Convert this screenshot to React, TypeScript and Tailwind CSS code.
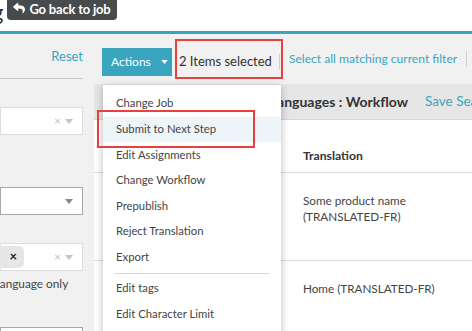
import { FaReply } from 'react-icons/fa'

const teal = 'text-[#3aa5bf]'

function Caret({ className = '' }: { className?: string }) {
  return (
    <svg width="8" height="5" viewBox="0 0 8 5" className={className}>
      <path d="M0 0h8L4 5z" fill="currentColor" />
    </svg>
  )
}

function SelectBox({ className = '', clear = true, children }: { className?: string; clear?: boolean; children?: React.ReactNode }) {
  return (
    <div className={`flex items-center w-[83px] h-[28px] bg-white border ${className}`}>
      <div className="flex-1 flex items-center">{children}</div>
      {clear && <span className="text-[12px] text-[#c4c4c4] mr-[4px] leading-none">×</span>}
      <Caret className={clear ? 'text-[#c4c4c4] mr-[9px]' : 'text-[#888] mr-[9px]'} />
    </div>
  )
}

const menuItems = [
  'Change Job',
  'Submit to Next Step',
  'Edit Assignments',
  'Change Workflow',
  'Prepublish',
  'Reject Translation',
  'Export',
]

export default function App() {
  return (
    <div className="w-[472px] h-[331px] overflow-hidden bg-white text-[#444] font-['Lato',sans-serif] relative">
      {/* header */}
      <div className="h-[31px] flex items-start">
        <span className="text-[22px] leading-[20px] text-[#333] ml-[-8px] mt-[2px]">g</span>
        <div className="ml-[4px] h-[20px] px-[6px] flex items-center gap-[4px] bg-[#474b4c] text-white rounded-b-[4px] shrink-0">
          <FaReply className="w-[12px] h-[12px] -mt-[4px]" />
          <span className="text-[13px] font-bold tracking-[-0.2px]">Go back to job</span>
        </div>
      </div>
      <div className="h-[3px] bg-[#3aa5bf]" />

      <div className="flex h-[297px]">
        {/* sidebar */}
        <div className="w-[94px] shrink-0 bg-[#f1f1f1]">
          <div className="w-[83px] h-[45px] border-b border-[#c9c9c9] flex items-center justify-end pt-[1px]">
            <span className={`${teal} text-[13px]`}>Reset</span>
          </div>
          <SelectBox className="mt-[28px] border-[#dddddd]" />
          <SelectBox clear={false} className="mt-[52px] h-[27px] border-[#a8a8a8]" />
          <SelectBox className="mt-[28px] border-[#dddddd]">
            <span className="ml-[-4px] h-[22px] w-[27px] bg-[#e6e6e6] rounded-r-[5px] flex items-center justify-end pr-[7px] text-[13px] font-bold text-[#222]">
              ×
            </span>
          </SelectBox>
          <div className="mt-[4px] ml-[-3px] text-[11.8px] text-[#444] whitespace-nowrap">language only</div>
          <div className="mt-[34px] w-[83px] h-[28px] bg-white border border-[#a8a8a8]" />
        </div>

        {/* main */}
        <div className="flex-1 min-w-0 relative">
          <div className="h-[50px] bg-[#f1f1f1] flex items-start pl-[8px] whitespace-nowrap">
            <button className="shrink-0 mt-[14px] h-[28px] w-[70px] bg-[#3aa5bf] text-white text-[12px] flex items-center gap-[10px] pl-[9px]">
              Actions
              <Caret className="text-white w-[7px] h-[4px]" />
            </button>
            <div className="shrink-0 ml-[3px] mt-[5px] h-[40px] border-2 border-[#e9403f] flex items-center pt-[6px] pl-[2px] pr-[1px]">
              <span className="text-[13px] text-[#333]">2 Items selected</span>
              <span className="ml-[7px] w-px h-[16px] bg-[#cfcfcf]" />
            </div>
            <div className="shrink-0 ml-[6px] mt-[16px] flex items-center">
              <span className={`${teal} text-[12.1px]`}>Select all matching current filter</span>
              <span className="ml-[9px] w-px h-[16px] bg-[#cfcfcf]" />
            </div>
          </div>

          <div className="h-[36px] bg-[#e6e6e6] border-b border-[#d6d6d6] flex items-center whitespace-nowrap text-[14px]">
            <div className="w-[314px] shrink-0 text-right font-bold text-[#333] overflow-hidden">
              Strings : Languages : Workflow
            </div>
            <span className={`${teal} ml-[17px] text-[13.5px]`}>Save Search</span>
          </div>

          <div className="bg-white text-[11.7px]">
            <div className="h-[53px] border-b border-[#dcdcdc] flex items-end pb-[7px]">
              <div className="w-[209px] shrink-0" />
              <span className="font-bold text-[#333] text-[12.2px]">Translation</span>
            </div>
            <div className="h-[88px] border-b border-[#dcdcdc] flex pt-[19px]">
              <div className="w-[209px] shrink-0" />
              <span className="leading-[16px]">
                Some product name
                <br />
                (TRANSLATED-FR)
              </span>
            </div>
            <div className="h-[70px] flex pt-[19px]">
              <div className="w-[209px] shrink-0" />
              <span className="leading-[16px]">Home (TRANSLATED-FR)</span>
            </div>
          </div>

          {/* dropdown menu */}
          <div className="absolute left-[9px] top-[51px] w-[178px] h-[260px] bg-white shadow-[0_2px_8px_rgba(0,0,0,0.28)] pt-[6px] text-[11.3px] text-[#444]">
            {menuItems.map((item, i) => (
              <div
                key={item}
                className={`h-[25.6px] flex items-center pl-[13px] ${i === 1 ? 'bg-[#edf5f8]' : ''}`}
              >
                {item}
              </div>
            ))}
            <div className="h-[6px] flex items-center px-[11px]">
              <div className="h-px w-full bg-[#d8d8d8]" />
            </div>
            <div className="h-[25.6px] flex items-center pl-[13px]">Edit tags</div>
            <div className="h-[25.6px] flex items-center pl-[13px]">Edit Character Limit</div>
            <div className="absolute left-[-6px] top-[25px] w-[158px] h-[38px] border-2 border-[#e9403f]" />
          </div>
        </div>
      </div>
    </div>
  )
}
